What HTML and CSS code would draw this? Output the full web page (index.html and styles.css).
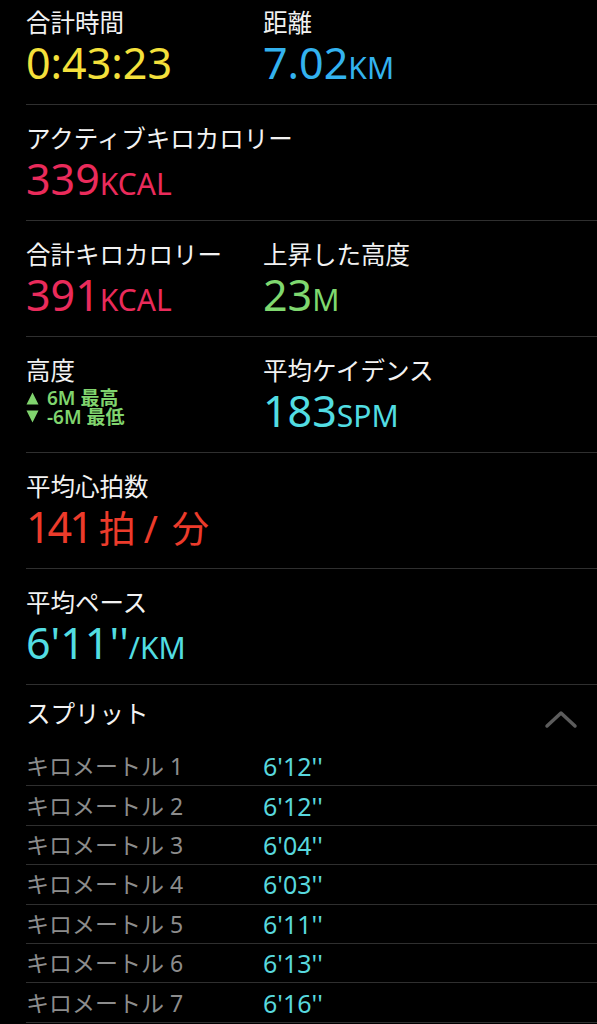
FILE: index.html
```html
<!DOCTYPE html>
<html lang="ja">
<head>
    <meta charset="UTF-8">
    <meta name="viewport" content="width=device-width, initial-scale=1.0">
    <title>ワークアウト</title>
    <link rel="stylesheet" href="styles.css">
</head>
<body>

<section class="metric first">
    <div class="cell">
        <div class="label">合計時間</div>
        <div class="value yellow">0:43:23</div>
    </div>
    <div class="cell">
        <div class="label">距離</div>
        <div class="value blue">7.02<span class="unit">KM</span></div>
    </div>
</section>

<section class="metric">
    <div class="cell wide">
        <div class="label">アクティブキロカロリー</div>
        <div class="value pink">339<span class="unit">KCAL</span></div>
    </div>
</section>

<section class="metric">
    <div class="cell">
        <div class="label">合計キロカロリー</div>
        <div class="value pink">391<span class="unit">KCAL</span></div>
    </div>
    <div class="cell">
        <div class="label">上昇した高度</div>
        <div class="value green">23<span class="unit">M</span></div>
    </div>
</section>

<section class="metric">
    <div class="cell">
        <div class="label">高度</div>
        <div class="elevation">
            <div class="elev-row">
                <svg class="tri" width="13" height="13" viewBox="0 0 13 13"><polygon points="6.5,0.5 12.5,12.5 0.5,12.5" fill="#80d46e"/></svg>
                <span>6M 最高</span>
            </div>
            <div class="elev-row">
                <svg class="tri" width="13" height="13" viewBox="0 0 13 13"><polygon points="0.5,0.5 12.5,0.5 6.5,12.5" fill="#80d46e"/></svg>
                <span>-6M 最低</span>
            </div>
        </div>
    </div>
    <div class="cell">
        <div class="label">平均ケイデンス</div>
        <div class="value cyan">183<span class="unit">SPM</span></div>
    </div>
</section>

<section class="metric">
    <div class="cell wide">
        <div class="label">平均心拍数</div>
        <div class="value red"><span class="tight">141</span><span class="unit-jp">拍</span><span class="slash">/</span><span class="unit-jp">分</span></div>
    </div>
</section>

<section class="metric">
    <div class="cell wide">
        <div class="label">平均ペース</div>
        <div class="value cyan">6'11''<span class="unit">/KM</span></div>
    </div>
</section>

<section class="splits">
    <div class="splits-head">
        <span class="label">スプリット</span>
        <svg class="chevron" width="34" height="20" viewBox="0 0 34 20">
            <polyline points="3,17 17,4 31,17" fill="none" stroke="#5c5c5c" stroke-width="3.5" stroke-linecap="round" stroke-linejoin="round"/>
        </svg>
    </div>
    <div class="split"><span class="split-name">キロメートル 1</span><span class="split-time">6'12''</span></div>
    <div class="split"><span class="split-name">キロメートル 2</span><span class="split-time">6'12''</span></div>
    <div class="split"><span class="split-name">キロメートル 3</span><span class="split-time">6'04''</span></div>
    <div class="split"><span class="split-name">キロメートル 4</span><span class="split-time">6'03''</span></div>
    <div class="split"><span class="split-name">キロメートル 5</span><span class="split-time">6'11''</span></div>
    <div class="split"><span class="split-name">キロメートル 6</span><span class="split-time">6'13''</span></div>
    <div class="split"><span class="split-name">キロメートル 7</span><span class="split-time">6'16''</span></div>
</section>

</body>
</html>
```

FILE: styles.css
```css
body {
    margin: 0;
    padding: 0;
    background-color: #000;
    color: #fff;
    font-family: "Noto Sans", "Noto Sans CJK JP", sans-serif;
    overflow: hidden;
}

.metric {
    display: grid;
    grid-template-columns: 237px 1fr;
    margin-left: 26px;
    padding: 20px 0 19px;
    border-bottom: 1px solid #2f2f2f;
}

.metric.first {
    padding-top: 9px;
}

.cell {
    height: 76px;
}

.cell.wide {
    grid-column: 1 / 3;
}

.label {
    height: 28px;
    font-size: 24.5px;
    line-height: 28px;
    color: #f2f2f2;
    white-space: nowrap;
}

.value {
    height: 46px;
    padding-top: 2px;
    font-size: 43px;
    line-height: 48px;
    white-space: nowrap;
}

.unit {
    font-size: 30px;
    line-height: 1;
}

.tight {
    letter-spacing: -3px;
}

.unit-jp {
    font-family: "Noto Sans CJK JP", sans-serif;
    font-size: 37px;
    line-height: 1;
    margin-left: 8px;
}

.slash {
    font-size: 38px;
    line-height: 1;
    margin: 0 6px 0 8px;
}

.yellow { color: #f4e03b; }
.blue { color: #33b2ef; }
.pink { color: #ea2b5b; }
.green { color: #7fd86f; }
.cyan { color: #52dde2; }
.red { color: #ec3b2b; }

.elevation {
    margin-top: 4px;
    color: #80d46e;
    font-size: 19px;
    font-weight: 600;
    white-space: nowrap;
}

.elev-row {
    display: flex;
    align-items: center;
    gap: 8px;
    height: 18.5px;
    line-height: 18.5px;
}

.tri {
    flex: none;
}

.splits-head {
    display: flex;
    justify-content: space-between;
    align-items: center;
    height: 28px;
    margin-left: 26px;
    padding: 15px 19px 19px 0;
}

.chevron {
    margin-top: 10px;
}

.split {
    display: grid;
    grid-template-columns: 237px 1fr;
    align-items: center;
    height: 38.4px;
    margin-left: 26px;
    border-bottom: 1px solid #2f2f2f;
}

.split-name {
    color: #8c8c8c;
    font-size: 23px;
    line-height: 28px;
}

.split-time {
    color: #58d8de;
    font-size: 25px;
    line-height: 28px;
}
```
